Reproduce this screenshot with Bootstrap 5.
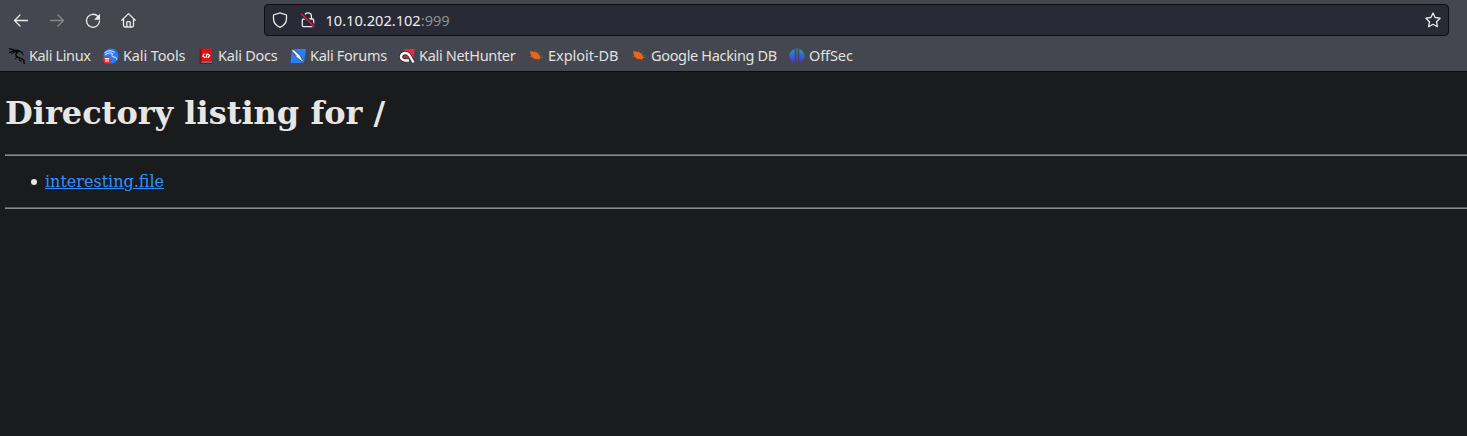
<!DOCTYPE html>
<html lang="en">
<head>
<meta charset="utf-8">
<title>Directory listing for /</title>
<link href="https://cdn.jsdelivr.net/npm/bootstrap@5.3.0/dist/css/bootstrap.min.css" rel="stylesheet">
<style>
body{background:#1a1b1c;color:#e8e6e3;font-family:"Noto Sans",sans-serif;overflow:hidden}
.chrome{background:#44474f;height:72px;border-bottom:1px solid #0c0c0e;color:#e8e6e3}
.toolbar{height:40px;padding-left:13px}
.tool{width:36px;height:40px;padding-right:20px}
svg{display:block;flex:none;overflow:visible}
.line{fill:none;stroke:#ecebe9;stroke-width:1.3;stroke-linecap:round;stroke-linejoin:round}
.urlbar{width:1185px;height:32px;margin-left:107px;background:#282a35;border:1px solid #0e0f12;border-radius:4px;padding:0 7px}
.security{margin-left:12px}
.address{font-size:14.6px;margin-left:9.5px;padding-bottom:1px;color:#f0efed;line-height:30px;white-space:nowrap}
.port{color:#8e8f96}
.bookmarks{height:31px;gap:12px;padding-left:9px}
.bookmark{gap:4px;font-size:14.5px;line-height:20px;color:#e2e0de;text-decoration:none;white-space:nowrap}
.bookmark span{width:var(--w);letter-spacing:var(--ls);padding-bottom:2px}
.listing{font-family:"DejaVu Serif",serif;padding:22px 0 0 5px;font-size:16px;line-height:19px}
.listing h1{font-family:inherit;font-size:32px;font-weight:700;line-height:38px;margin:0 0 22px}
.listing hr{margin:0;opacity:1;border:0;height:2px;background:linear-gradient(#5d5d5d 50%,#898989 50%)}
.listing ul{padding-left:26px;margin:16px 0;list-style:none}
.listing li::before{content:"";display:inline-block;width:6px;height:6px;border-radius:50%;background:#e8e6e3;margin-right:8px;vertical-align:2px}
.listing a{color:#3391ff;text-decoration:underline}
</style>
</head>
<body>
<header class="chrome">
  <nav class="toolbar d-flex align-items-center">
    <div class="tool d-flex align-items-center"><svg width="16" height="16" viewBox="0 0 16 16"><path class="line" d="M14.5 8.500H1.500M7 3 1.500 8.500 7 14"/></svg></div>
    <div class="tool d-flex align-items-center"><svg width="16" height="16" viewBox="0 0 16 16" opacity=".4"><path class="line" d="M1.500 8.500H14.500M9 3 14.500 8.500 9 14"/></svg></div>
    <div class="tool d-flex align-items-center"><svg width="16" height="16" viewBox="0 0 16 16"><path class="line" d="M12.900 4.500A6.500 6.500 0 1 0 14.500 9"/><path d="M15 1.800v5.900H9z" fill="#ecebe9"/></svg></div>
    <div class="tool d-flex align-items-center"><svg width="16" height="16" viewBox="0 0 16 16"><path class="line" d="M.8 8.300 7.500 1.600 14.200 8.300M2.500 7.200v6.300A1.500 1.500 0 0 0 4 15h7a1.500 1.500 0 0 0 1.500-1.500V7.200M5.800 14.800v-4.300a.8.8 0 0 1 .8-.8h1.800a.8.8 0 0 1 .8.800v4.300"/></svg></div>
    <div class="urlbar d-flex align-items-center">
      <svg width="16" height="16" viewBox="0 0 16 16"><path class="line" d="M8 .8 14.500 3v3.500c0 4-2.300 7-6.500 8.800C3.800 13.500 1.500 10.500 1.500 6.500V3z"/></svg>
      <svg class="security" width="16" height="16" viewBox="0 0 16 16"><path class="line" d="M4.600 7V4.200a3.400 3.400 0 0 1 6.800 0V7M3.500 7h9a1.200 1.200 0 0 1 1.200 1.200v5a1.500 1.500 0 0 1-1.500 1.500H3.800a1.500 1.500 0 0 1-1.500-1.500v-5A1.200 1.200 0 0 1 3.500 7z"/><path d="M2 2 14.500 14.500" stroke="#282a35" stroke-width="3.500"/><path d="M1.300 1.800 14.300 14.700" stroke="#e6174b" stroke-width="1.400"/></svg>
      <div class="address">10.10.202.102<span class="port">:999</span></div>
      <svg class="ms-auto" width="16" height="16" viewBox="0 0 16 16"><path class="line" d="m8 1 2.100 4.500 5 .7-3.600 3.500.9 5L8 12.300l-4.400 2.400.9-5L.9 6.200l5-.7z"/></svg>
    </div>
  </nav>
  <nav class="bookmarks d-flex align-items-center">
    <a class="bookmark d-flex align-items-center"><svg width="16" height="16" viewBox="0 0 16 16"><g fill="none" stroke="#08090a" stroke-linecap="round"><path stroke-width="1.500" d="M.5.800 5 2l4 .4 4 2M.6 4.500 4 3.200l4 .3M9 3.500C6.500 5 6 8 8.500 9.300c2.500.9 5 .7 6.300 3.200l.4 2.800"/><path d="m2.500 6 3-2M12 4.500l2.500 2M8 9l-2 2M11 10l-1 2 2.500 1"/></g></svg><span style="--w:62px;--ls:-.37px">Kali Linux</span></a>
    <a class="bookmark d-flex align-items-center"><svg width="16" height="16" viewBox="0 0 16 16"><circle cx="8" cy="8" r="7.500" fill="#267bff"/><path d="M1.500 5c3-3 7-2.800 10-.8M2 7c3-2.500 6-2.300 7.500-1-2 2 1 3 2.600 3.300 1 .3 1.500 1.300 1.700 2.200" fill="none" stroke="#b9d5ff" stroke-width="1.200"/><circle cx="4" cy="12" r="3.700" fill="#e82931"/><path d="M1.800 10.500h4.500M3 10.500V14m2-3.500V14" stroke="#fff" fill="none"/></svg><span style="--w:63px;--ls:-.13px">Kali Tools</span></a>
    <a class="bookmark d-flex align-items-center"><svg width="16" height="16" viewBox="0 0 16 16"><path d="M2.500 .500H14v14H2.500z" fill="#dc1017"/><path d="M1.500 .500h2v14h-2z" fill="#8e0c12"/><path d="M1.500 14.500H14v1.200H1.500z" fill="#25282d"/><path d="M3.500 13.700H14v.8H3.500z" fill="#aaa"/><path d="M6.500 5.500 4.800 8l2 1.500m2.500-4L7.800 10M9.700 6l2 1.500-2 2.300" fill="none" stroke="#fff" stroke-width="1.200"/></svg><span style="--w:60px;--ls:-.24px">Kali Docs</span></a>
    <a class="bookmark d-flex align-items-center"><svg width="16" height="16" viewBox="0 0 16 16"><path d="M2 1h14l-2 14H.5z" fill="#2480ff"/><path d="m.5.500 4 1.700 6 5.500 2 4 3 3.800-4.500-2.600-4.500-3.500z" fill="#f7f7f7" stroke="#282b30" stroke-width=".8"/><path d="m2 3 5 5m3 1.500 2.500 3" stroke="#8d9095" stroke-width=".8"/></svg><span style="--w:77px;--ls:-.3px">Kali Forums</span></a>
    <a class="bookmark d-flex align-items-center"><svg width="16" height="16" viewBox="0 0 16 16"><path d="M4.500 1H16l-2.500 12z" fill="#ef2939"/><path d="M14.500 14.500 10.500 7.500C8 3.500 3 4.500 2 8c-.5 2.500 1.500 4.500 4.500 4.500" fill="none" stroke="#25272b" stroke-width="4"/><path d="M14.500 14.500 10.500 7.500C8 3.500 3 4.500 2 8c-.5 2.500 1.500 4.500 4.500 4.500H10" fill="none" stroke="#f7f7f7" stroke-width="2.500"/><path d="M5 9c1-1.200 3-1 4 1" fill="none" stroke="#ef2939" stroke-width="1.300"/></svg><span style="--w:97px;--ls:-.32px">Kali NetHunter</span></a>
    <a class="bookmark d-flex align-items-center"><svg width="16" height="16" viewBox="0 0 16 16"><path d="m2 3.700 2.500-.5 2 .8 2 .2 2.500 2.300 1.700 3.200-2 1.600-3.700-.3-3.500-2L2.700 6z" fill="#ed6517"/><path d="m4 4-2-1m5 1 .5-1.500M10 6l2-1.500M4 8l-2.500 1M7 10l-1.500 1.500M11 11v1.500M13 9.500l2 .2M12 8l1.500-.5" stroke="#b95c28" stroke-width=".7"/></svg><span style="--w:71px;--ls:-.04px">Exploit-DB</span></a>
    <a class="bookmark d-flex align-items-center"><svg width="16" height="16" viewBox="0 0 16 16"><path d="m2 3.700 2.500-.5 2 .8 2 .2 2.500 2.300 1.700 3.200-2 1.600-3.700-.3-3.500-2L2.700 6z" fill="#ed6517"/><path d="m4 4-2-1m5 1 .5-1.500M10 6l2-1.500M4 8l-2.500 1M7 10l-1.500 1.500M11 11v1.500M13 9.500l2 .2M12 8l1.500-.5" stroke="#b95c28" stroke-width=".7"/></svg><span style="--w:126px;--ls:-.34px">Google Hacking DB</span></a>
    <a class="bookmark d-flex align-items-center"><svg width="16" height="16" viewBox="0 0 16 16"><defs><linearGradient id="osg" x2="0" y2="1"><stop stop-color="#18a3c5"/><stop offset="1" stop-color="#5524d9"/></linearGradient></defs><path d="M5.700.900v13.200C-1.500 13-1.500 3.500 5.700.900zM10.300.900v13.200c7.200-1.100 7.200-10.600 0-13.200zM7.400.500h1.200v15H7.400z" fill="url(#osg)"/></svg><span style="--w:44px;--ls:-.1px">OffSec</span></a>
  </nav>
</header>
<main class="listing">
  <h1>Directory listing for /</h1>
  <hr>
  <ul><li><a href="#">interesting.file</a></li></ul>
  <hr>
</main>
<script src="https://cdn.jsdelivr.net/npm/bootstrap@5.3.0/dist/js/bootstrap.bundle.min.js"></script>
</body>
</html>
